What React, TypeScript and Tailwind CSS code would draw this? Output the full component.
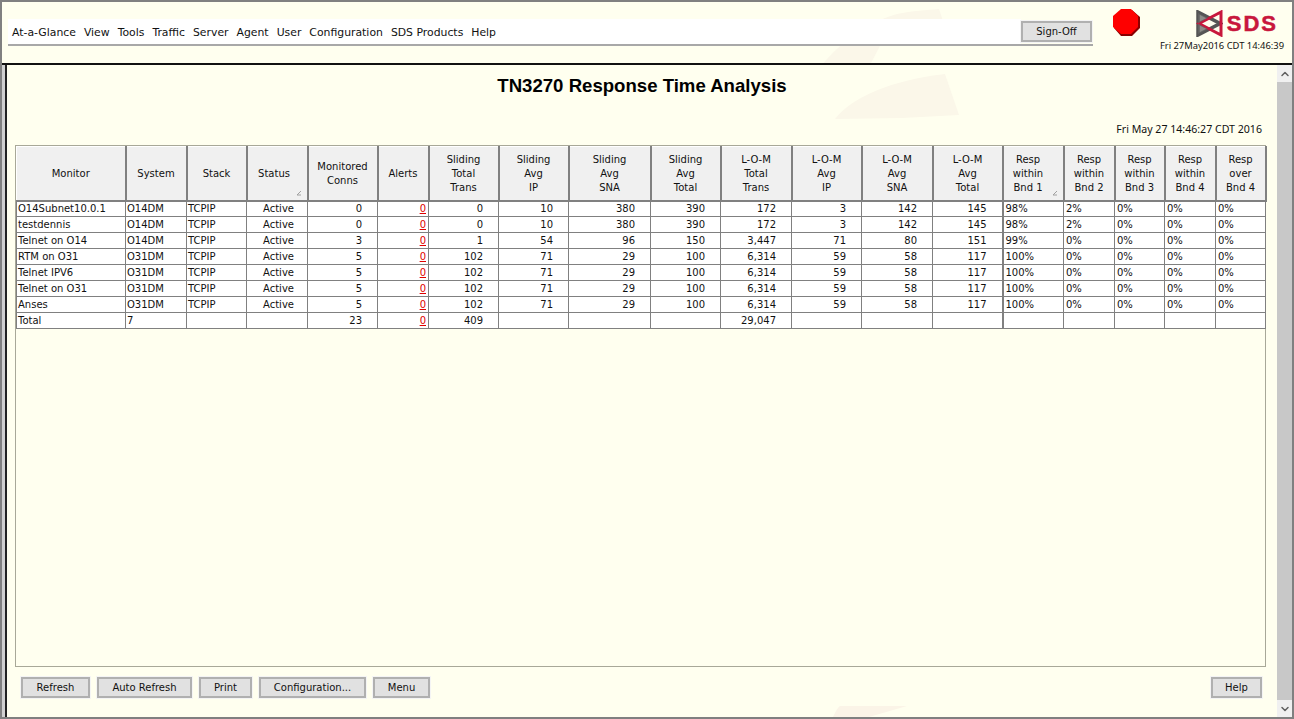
import { ChevronDown, ChevronUp } from "lucide-react";

const menuItems = [
  "At-a-Glance",
  "View",
  "Tools",
  "Traffic",
  "Server",
  "Agent",
  "User",
  "Configuration",
  "SDS Products",
  "Help",
];

type Align = "left" | "right" | "center" | "alert" | "pct";

const columns: { title: string[]; width: string; align: Align; sortPad?: string }[] = [
  { title: ["Monitor"], width: "w-[109px]", align: "left" },
  { title: ["System"], width: "w-[61px]", align: "left" },
  { title: ["Stack"], width: "w-[60px]", align: "left" },
  { title: ["Status"], width: "w-[61px]", align: "center", sortPad: "pr-[6px]" },
  { title: ["Monitored", "Conns"], width: "w-[70px]", align: "right" },
  { title: ["Alerts"], width: "w-[51px]", align: "alert" },
  { title: ["Sliding", "Total", "Trans"], width: "w-[70px]", align: "right" },
  { title: ["Sliding", "Avg", "IP"], width: "w-[70px]", align: "right" },
  { title: ["Sliding", "Avg", "SNA"], width: "w-[82px]", align: "right" },
  { title: ["Sliding", "Avg", "Total"], width: "w-[70px]", align: "right" },
  { title: ["L-O-M", "Total", "Trans"], width: "w-[71px]", align: "right" },
  { title: ["L-O-M", "Avg", "IP"], width: "w-[70px]", align: "right" },
  { title: ["L-O-M", "Avg", "SNA"], width: "w-[71px]", align: "right" },
  { title: ["L-O-M", "Avg", "Total"], width: "w-[70px]", align: "right" },
  { title: ["Resp", "within", "Bnd 1"], width: "w-[61px]", align: "pct", sortPad: "pr-[10px]" },
  { title: ["Resp", "within", "Bnd 2"], width: "w-[51px]", align: "pct" },
  { title: ["Resp", "within", "Bnd 3"], width: "w-[50px]", align: "pct" },
  { title: ["Resp", "within", "Bnd 4"], width: "w-[51px]", align: "pct" },
  { title: ["Resp", "over", "Bnd 4"], width: "w-[50px]", align: "pct" },
];

const rows = [
  ["O14Subnet10.0.1", "O14DM", "TCPIP", "Active", "0", "0", "0", "10", "380", "390", "172", "3", "142", "145", "98%", "2%", "0%", "0%", "0%"],
  ["testdennis", "O14DM", "TCPIP", "Active", "0", "0", "0", "10", "380", "390", "172", "3", "142", "145", "98%", "2%", "0%", "0%", "0%"],
  ["Telnet on O14", "O14DM", "TCPIP", "Active", "3", "0", "1", "54", "96", "150", "3,447", "71", "80", "151", "99%", "0%", "0%", "0%", "0%"],
  ["RTM on O31", "O31DM", "TCPIP", "Active", "5", "0", "102", "71", "29", "100", "6,314", "59", "58", "117", "100%", "0%", "0%", "0%", "0%"],
  ["Telnet IPV6", "O31DM", "TCPIP", "Active", "5", "0", "102", "71", "29", "100", "6,314", "59", "58", "117", "100%", "0%", "0%", "0%", "0%"],
  ["Telnet on O31", "O31DM", "TCPIP", "Active", "5", "0", "102", "71", "29", "100", "6,314", "59", "58", "117", "100%", "0%", "0%", "0%", "0%"],
  ["Anses", "O31DM", "TCPIP", "Active", "5", "0", "102", "71", "29", "100", "6,314", "59", "58", "117", "100%", "0%", "0%", "0%", "0%"],
  ["Total", "7", "", "", "23", "0", "409", "", "", "", "29,047", "", "", "", "", "", "", "", ""],
];

const alignClass: Record<Align, string> = {
  left: "text-left pl-[1px]",
  right: "text-right pr-[15px]",
  center: "text-center pl-[3px]",
  alert: "text-right pr-[2px] text-[#e00000] underline",
  pct: "text-left pl-[2px]",
};

function Btn({ label, className = "" }: { label: string; className?: string }) {
  return (
    <button className={`h-[21px] border-2 border-[#b0b0b0] bg-[#e1e1e1] text-[10px] leading-[16px] text-[#111] outline outline-1 outline-[#f4f4f4] ${className}`}>
      {label}
    </button>
  );
}

function Watermark() {
  return (
    <svg className="absolute left-0 top-0 pointer-events-none" width="1294" height="719">
      <path d="M820 63 C 835 45 860 22 895 12 C 910 9 925 8 937 7 L 941 19 L 880 40 L 868 63 Z" fill="#fbf7e9" />
      <path d="M833 117 C 850 95 890 78 943 72 L 957 113 L 900 116 Z" fill="#fbf7e9" />
      <path d="M830 717 C 833 711 835 706 838 704 L 905 704 L 860 717 Z" fill="#fbf4e7" />
    </svg>
  );
}

function StopSign() {
  return (
    <svg width="27" height="27" viewBox="0 0 27 27">
      <polygon points="8,1 19,1 27,8 27,19 19,27 8,27 1,19 1,8" fill="#8a0000" />
      <polygon points="8,0 18,0 25,7 25,18 18,25 8,25 0,18 0,7" fill="#fe0000" />
    </svg>
  );
}

function Logo() {
  return (
    <div className="flex items-center h-[27px] text-[#c8173c]">
      <svg width="27" height="27" viewBox="0 0 27 27">
        <path d="M2 2 L24 13.5 L2 25 Z" fill="none" stroke="#555" strokeWidth="3.5" />
        <path d="M25 2 L3 13.5 L25 25 Z" fill="none" stroke="#c8173c" strokeWidth="3" />
        <path d="M2 3 L12 8 L2 13.5 L12 19 L2 24 Z" fill="#666" opacity="0.75" />
      </svg>
      <span className="ml-[4px] text-[22px] leading-[27px] font-bold tracking-[2px] [-webkit-text-stroke:0.5px_#c8173c] font-['Liberation_Sans',sans-serif]">
        SDS
      </span>
    </div>
  );
}

export default function App() {
  return (
    <div className="relative flex flex-col w-[1294px] h-[719px] overflow-hidden border-2 border-[#808080] bg-[#ffffef] text-[10px] text-[#111] font-['DejaVu_Sans',sans-serif]">
      <Watermark />

      {/* Top bar */}
      <div className="relative flex h-[63px] shrink-0 border-b-2 border-[#111]">
        <div className="ml-[6px] mt-[17px] flex h-[27px] w-[1085px] border-b-2 border-[#a8a8a8]">
          <div className="flex w-[1013px] items-center gap-[8px] bg-white pl-[4px] pt-[3px] text-[10.85px]">
            {menuItems.map((item) => (
              <span key={item}>{item}</span>
            ))}
          </div>
          <Btn label="Sign-Off" className="mt-[2px] w-[71px]" />
        </div>
        <div className="ml-[20px] mt-[7px]">
          <StopSign />
        </div>
        <div className="ml-auto mr-[8px] flex flex-col items-end pt-[8px]">
          <div className="mr-[6px]">
            <Logo />
          </div>
          <span className="mt-[2px] text-[9.4px] leading-[14px] font-['Noto_Sans',sans-serif]">Fri 27May2016 CDT 14:46:39</span>
        </div>
      </div>

      <div className="relative flex flex-1 min-h-0">
        <div className="w-[5px] shrink-0 border-r-2 border-[#222] bg-[#d0d0d0]" />

        {/* Main */}
        <div className="flex w-[1270px] flex-col px-[8px] pt-[10px]">
          <h1 className="text-center text-[18.6px] leading-[21px] font-bold text-black font-['Liberation_Sans',sans-serif]">
            TN3270 Response Time Analysis
          </h1>
          <div className="mt-[26px] h-[14px] pr-[7px] text-right text-[10.6px] leading-[14px] font-['Noto_Sans',sans-serif]">
            Fri May 27 14:46:27 CDT 2016
          </div>

          <div className="mt-[9px] h-[522px] w-[1251px] border border-[#a8a898]">
            <table className="w-[1249px] table-fixed border-collapse text-[10px] leading-[14px]">
              <colgroup>
                {columns.map((c) => (
                  <col key={c.title.join(" ")} className={c.width} />
                ))}
              </colgroup>
              <thead>
                <tr className="h-[54px]">
                  {columns.map((c) => (
                    <th
                      key={c.title.join(" ")}
                      className={`relative border-t border-l border-white border-r-2 border-r-[#808080] border-b-2 border-b-[#808080] bg-[#f0f0f0] p-0 pt-[2px] text-center font-normal ${c.sortPad ?? ""}`}
                    >
                      {c.title.map((line) => (
                        <div key={line}>{line}</div>
                      ))}
                      {c.sortPad && (
                        <svg className="absolute right-[5px] bottom-[4px]" width="6" height="6" viewBox="0 0 6 6">
                          <path d="M5 1 L1 5 M5 5 L1 5" stroke="#a0a0a0" strokeWidth="1" fill="none" />
                        </svg>
                      )}
                    </th>
                  ))}
                </tr>
              </thead>
              <tbody>
                {rows.map((row) => (
                  <tr key={row[0]} className="h-[16px] bg-white">
                    {row.map((cell, i) => (
                      <td
                        key={i}
                        className={`overflow-hidden whitespace-nowrap border-r border-b border-[#808080] p-0 ${alignClass[columns[i].align]} ${i === 0 ? "border-l" : ""} ${i === 14 ? "border-l-2" : ""}`}
                      >
                        {cell}
                      </td>
                    ))}
                  </tr>
                ))}
              </tbody>
            </table>
          </div>

          <div className="mt-[10px] flex gap-[7px] pl-[6px] pr-[4px]">
            <Btn label="Refresh" className="w-[69px]" />
            <Btn label="Auto Refresh" className="w-[95px]" />
            <Btn label="Print" className="w-[53px]" />
            <Btn label="Configuration..." className="w-[107px]" />
            <Btn label="Menu" className="w-[57px]" />
            <Btn label="Help" className="ml-auto mr-[3px] w-[51px]" />
          </div>
        </div>

        {/* Scrollbar */}
        <div className="flex w-[15px] shrink-0 flex-col bg-[#c8c8c8]">
          <div className="flex h-[17px] items-center justify-center bg-[#f0f0f0]">
            <ChevronUp size={12} strokeWidth={3} className="text-[#606060]" />
          </div>
          <div className="flex-1" />
          <div className="flex h-[17px] items-center justify-center bg-[#f0f0f0]">
            <ChevronDown size={12} strokeWidth={3} className="text-[#606060]" />
          </div>
        </div>
      </div>
    </div>
  );
}
